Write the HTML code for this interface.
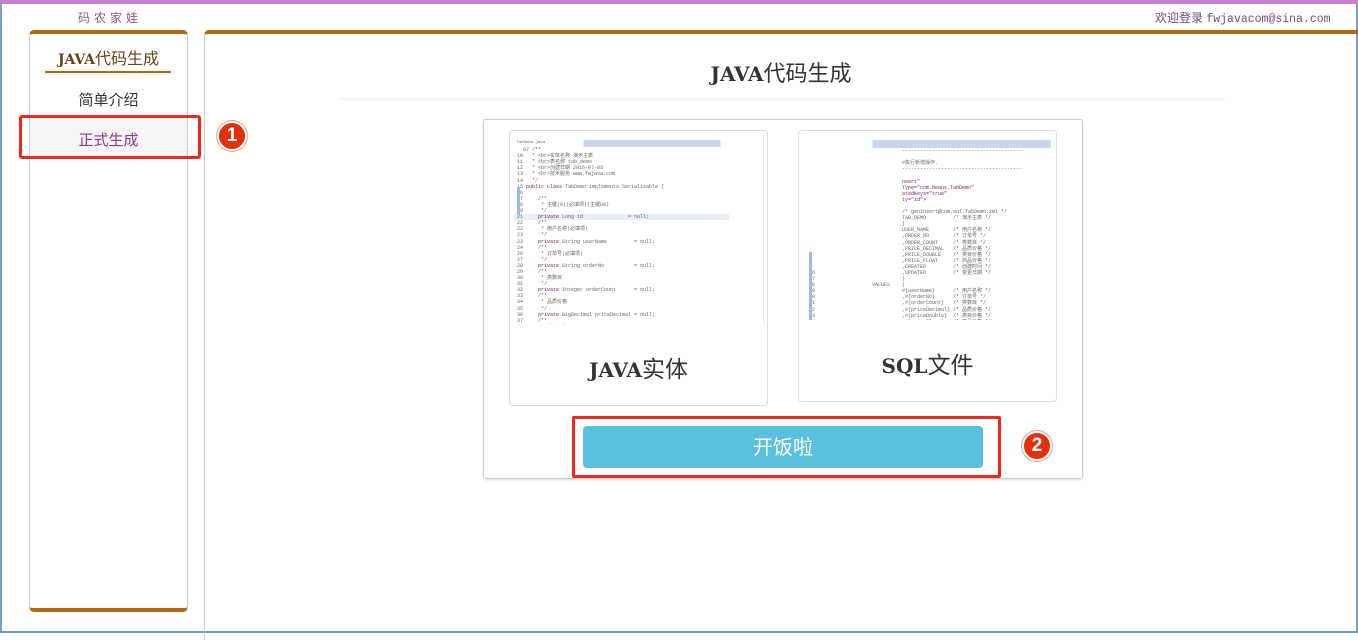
<!DOCTYPE html>
<html><head><meta charset="utf-8"><style>
*{margin:0;padding:0;box-sizing:border-box}
body{width:1358px;height:633px;position:relative;overflow:hidden;background:#fff;font-family:"Liberation Sans","Noto Sans CJK SC",sans-serif}
.a{position:absolute}
.j{font-family:"DejaVu Serif","Liberation Serif","Noto Sans CJK SC",serif;font-weight:bold;letter-spacing:0}
.code{position:absolute;overflow:hidden;background:#fff;font-family:"Liberation Mono","Noto Sans CJK SC",monospace;font-size:5px;line-height:6.1px;color:#666;white-space:pre}
.badge{position:absolute;width:30px;height:30px;border-radius:50%;background:#e2300f;border:2px solid #fff;box-shadow:0 0 0 1px #e8a090;color:#fff;font-weight:bold;font-size:19px;text-align:center;line-height:26px}
</style></head><body>
<div class="a" style="left:0;top:0;width:1358px;height:4px;background:#c97fd0"></div>
<div class="a" style="left:0;top:4px;width:2px;height:629px;background:#7aa0c8"></div>
<div class="a" style="left:1356px;top:4px;width:2px;height:629px;background:#7aa0c8"></div>
<div class="a" style="left:0;top:631px;width:1358px;height:2px;background:#6a9ad0"></div>
<div class="a" style="left:78px;top:9px;font-size:12px;letter-spacing:4px;color:#8a5a8a">码农家娃</div>
<div class="a" style="left:1155px;top:9px;font-size:12px;color:#7a4a7a">欢迎登录 <span style="font-family:'Liberation Mono',monospace;font-size:11.5px">fwjavacom@sina.com</span></div>

<div class="a" style="left:29px;top:30px;width:159px;height:582px;border:1px solid #ccc;border-top:4px solid #b5690f;border-bottom:4px solid #b5690f;border-radius:5px"></div>
<div class="a" style="left:29px;top:45px;width:159px;text-align:center;font-size:16px;color:#6a4418"><span class="j" style="font-size:14px">JAVA</span>代码生成</div>
<div class="a" style="left:45px;top:71px;width:126px;height:2px;background:#b5690f"></div>
<div class="a" style="left:29px;top:89px;width:159px;text-align:center;font-size:15px;color:#333">简单介绍</div>
<div class="a" style="left:30px;top:119px;width:157px;height:38px;background:#f6f5f6"></div>
<div class="a" style="left:29px;top:129px;width:159px;text-align:center;font-size:15px;color:#8a3a8a">正式生成</div>
<div class="a" style="left:19px;top:115px;width:182px;height:44px;border:3px solid #f02a1a;border-radius:3px"></div>
<div class="badge" style="left:217px;top:121px">1</div>

<div class="a" style="left:204px;top:30px;width:1160px;height:610px;border-left:1px solid #ccc;border-top:4px solid #b5690f;border-radius:5px 0 0 0"></div>
<div class="a" style="left:204px;top:56px;width:1160px;text-align:center;font-size:22px;color:#333;padding-right:6px"><span class="j" style="font-size:20px">JAVA</span>代码生成</div>
<div class="a" style="left:340px;top:98px;width:885px;height:3px;background:linear-gradient(#f0f0f0,#fafafa)"></div>

<div class="a" style="left:483px;top:119px;width:600px;height:360px;border:1px solid #ccc;border-radius:3px;box-shadow:0 1px 2px #ddd"></div>
<div class="a" style="left:509px;top:130px;width:259px;height:276px;border:1px solid #ddd;border-radius:4px"></div>
<div class="code" style="left:514px;top:134px;width:250px;height:190px;border-right:1px solid #eee">
<div style="height:7px;background:linear-gradient(90deg,#fff 0,#fff 28%,#c9d6ee 28%,#c9d6ee 83%,#fff 83%);font-size:4px"> TabDemo.java</div>   97 /**
 10   * &lt;br&gt;实体名称 演示主表
 11   * &lt;br&gt;表名称 tab_demo
 12   * &lt;br&gt;创建日期 2016-07-03
 13   * &lt;br&gt;技术服务 www.fwjava.com
 14   */
 15 <span style="color:#7a2060">public class</span> TabDemo implements Serializable {
 16
 17     /**
 18      * 主键(0)|必填项|(主键00)
 19      */
<span style="background:#e8eef8;display:inline-block;width:215px"> 21     <span style="color:#7a2060">private</span> Long id               = null;</span>
 22     /**
 22      * 用户名称|必填项|
 23      */
 23     <span style="color:#7a2060">private</span> String userName         = null;
 24     /**
 26      * 订单号|必填项|
 27      */
 28     <span style="color:#7a2060">private</span> String orderNo          = null;
 29     /**
 30      * 类数目
 31      */
 32     <span style="color:#7a2060">private</span> Integer orderCount      = null;
 33     /**
 34      * 品质价格
 35      */
 36     <span style="color:#7a2060">private</span> BigDecimal priceDecimal = null;
 37     /**
 38      * 类目价格
 39      */
 40     <span style="color:#7a2060">private</span> BigDecimal priceDouble  = null;
 41     /**</div>
<div class="a" style="left:517px;top:187px;width:3px;height:28px;background:#9bbbe0"></div>
<div class="a" style="left:509px;top:350px;width:259px;text-align:center;font-size:23px;color:#333"><span class="j" style="font-size:20px">JAVA</span>实体</div>

<div class="a" style="left:798px;top:130px;width:259px;height:272px;border:1px solid #ddd;border-radius:4px"></div>
<div class="code" style="left:803px;top:134px;width:248px;height:186px">
<div style="height:8px;background:linear-gradient(90deg,#fff 0,#fff 28%,#c9d6ee 28%)"></div>                                 ----------------------------------------

                                 #执行新增操作.
                                 ----------------------------------------

                                 <span style="color:#7a2060">nsert"</span>
                                 <span style="color:#7a2060">Type="com.beans.TabDemo"</span>
                                 <span style="color:#7a2060">atedKeys="true"</span>
                                 <span style="color:#7a2060">ty="id"&gt;</span>

                                 /* genInsert@com.sql.TabDemo.xml */
                                 TAB_DEMO         /* 演示主表 */
                                 (
                                 USER_NAME        /* 用户名称 */
                                 ,ORDER_NO        /* 订单号 */
                                 ,ORDER_COUNT     /* 类数目 */
                                 ,PRICE_DECIMAL   /* 品质价格 */
                                 ,PRICE_DOUBLE    /* 类目价格 */
                                 ,PRICE_FLOAT     /* 商品价格 */
                                 ,CREATED         /* 创建时间 */
  36                             ,UPDATED         /* 变更日期 */
  37                             )
  38                   VALUES    (
  39                             #{userName}      /* 用户名称 */
  40                             ,#{orderNo}      /* 订单号 */
  41                             ,#{orderCount}   /* 类数目 */
  42                             ,#{priceDecimal} /* 品质价格 */
  43                             ,#{priceDouble}  /* 类目价格 */
  44                             ,#{priceFloat}   /* 商品价格 */
  45                             ,#{created}      /* 创建时间 */
  46                             ,#{updated}      /* 变更日期 */
  47                             )</div>
<div class="a" style="left:809px;top:252px;width:3px;height:68px;background:#9bbbe0"></div>
<div class="a" style="left:798px;top:346px;width:259px;text-align:center;font-size:23px;color:#333"><span class="j" style="font-size:20px">SQL</span>文件</div>

<div class="a" style="left:583px;top:426px;width:400px;height:42px;background:#5bc0de;border-radius:4px;color:#fff;font-size:20px;text-align:center;line-height:44px">开饭啦</div>
<div class="a" style="left:572px;top:416px;width:429px;height:62px;border:3px solid #f02a1a;border-radius:2px"></div>
<div class="badge" style="left:1022px;top:431px">2</div>
</body></html>
